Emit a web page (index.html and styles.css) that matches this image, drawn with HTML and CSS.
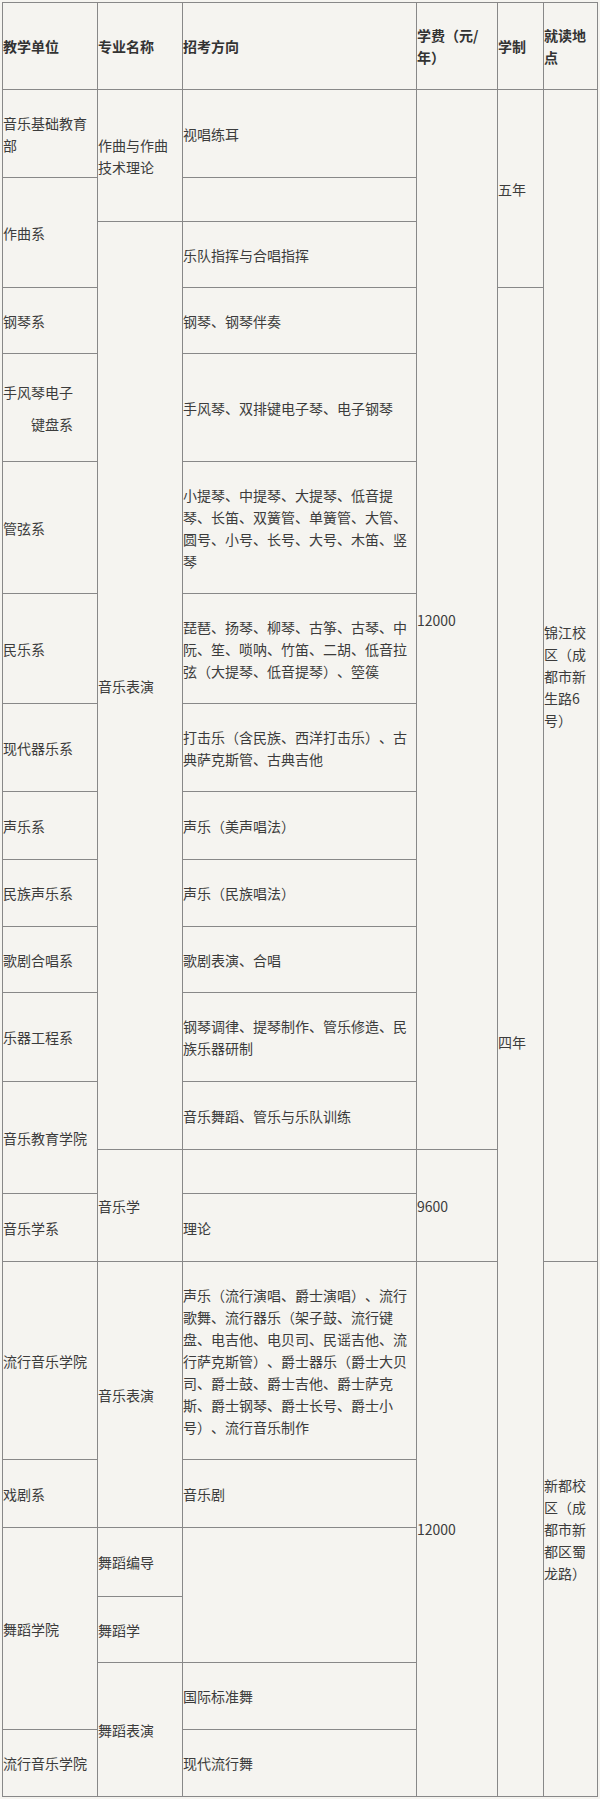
FILE: index.html
```html
<!DOCTYPE html>
<html lang="zh-CN">
<head>
<meta charset="utf-8">
<title>招生专业一览</title>
<link rel="stylesheet" href="styles.css">
</head>
<body>
<table class="grid">
  <colgroup>
    <col class="c-unit">
    <col class="c-major">
    <col class="c-dir">
    <col class="c-fee">
    <col class="c-len">
    <col class="c-loc">
  </colgroup>
  <thead>
    <tr class="h87">
      <th>教学单位</th>
      <th>专业名称</th>
      <th>招考方向</th>
      <th>学费（元/年）</th>
      <th>学制</th>
      <th>就读地点</th>
    </tr>
  </thead>
  <tbody>
    <tr class="h88">
      <td>音乐基础教育部</td>
      <td rowspan="2">作曲与作曲技术理论</td>
      <td>视唱练耳</td>
      <td rowspan="13">12000</td>
      <td rowspan="3">五年</td>
      <td rowspan="15">锦江校区（成都市新生路6号）</td>
    </tr>
    <tr class="h44">
      <td rowspan="2">作曲系</td>
      <td></td>
    </tr>
    <tr class="h66">
      <td rowspan="11">音乐表演</td>
      <td>乐队指挥与合唱指挥</td>
    </tr>
    <tr class="h66">
      <td>钢琴系</td>
      <td>钢琴、钢琴伴奏</td>
      <td rowspan="18">四年</td>
    </tr>
    <tr class="h108">
      <td><span class="line">手风琴电子</span><span class="line indent">键盘系</span></td>
      <td>手风琴、双排键电子琴、电子钢琴</td>
    </tr>
    <tr class="h132">
      <td>管弦系</td>
      <td>小提琴、中提琴、大提琴、低音提琴、长笛、双簧管、单簧管、大管、圆号、小号、长号、大号、木笛、竖琴</td>
    </tr>
    <tr class="h110">
      <td>民乐系</td>
      <td>琵琶、扬琴、柳琴、古筝、古琴、中阮、笙、唢呐、竹笛、二胡、低音拉弦（大提琴、低音提琴）、箜篌</td>
    </tr>
    <tr class="h88">
      <td>现代器乐系</td>
      <td>打击乐（含民族、西洋打击乐）、古典萨克斯管、古典吉他</td>
    </tr>
    <tr class="h68">
      <td>声乐系</td>
      <td>声乐（美声唱法）</td>
    </tr>
    <tr class="h67">
      <td>民族声乐系</td>
      <td>声乐（民族唱法）</td>
    </tr>
    <tr class="h66">
      <td>歌剧合唱系</td>
      <td>歌剧表演、合唱</td>
    </tr>
    <tr class="h89">
      <td>乐器工程系</td>
      <td>钢琴调律、提琴制作、管乐修造、民族乐器研制</td>
    </tr>
    <tr class="h68">
      <td rowspan="2">音乐教育学院</td>
      <td>音乐舞蹈、管乐与乐队训练</td>
    </tr>
    <tr class="h44">
      <td rowspan="2">音乐学</td>
      <td></td>
      <td rowspan="2">9600</td>
    </tr>
    <tr class="h68">
      <td>音乐学系</td>
      <td>理论</td>
    </tr>
    <tr class="h198">
      <td>流行音乐学院</td>
      <td rowspan="2">音乐表演</td>
      <td>声乐（流行演唱、爵士演唱）、流行歌舞、流行器乐（架子鼓、流行键盘、电吉他、电贝司、民谣吉他、流行萨克斯管）、爵士器乐（爵士大贝司、爵士鼓、爵士吉他、爵士萨克斯、爵士钢琴、爵士长号、爵士小号）、流行音乐制作</td>
      <td rowspan="6">12000</td>
      <td rowspan="6">新都校区（成都市新都区蜀龙路）</td>
    </tr>
    <tr class="h68">
      <td>戏剧系</td>
      <td>音乐剧</td>
    </tr>
    <tr class="h69">
      <td rowspan="3">舞蹈学院</td>
      <td>舞蹈编导</td>
      <td rowspan="2"></td>
    </tr>
    <tr class="h66">
      <td>舞蹈学</td>
    </tr>
    <tr class="h67">
      <td rowspan="2">舞蹈表演</td>
      <td>国际标准舞</td>
    </tr>
    <tr class="h67">
      <td>流行音乐学院</td>
      <td>现代流行舞</td>
    </tr>
  </tbody>
</table>
</body>
</html>
```

FILE: styles.css
```css
html, body {
  margin: 0;
  padding: 0;
  background: #f5f4f0;
}

body {
  padding: 2px 0 0 2px;
  font-family: "Noto Sans CJK SC", "Microsoft YaHei", sans-serif;
  font-size: 14px;
  line-height: 22px;
  color: #3c3c3c;
  text-spacing-trim: space-all;
  font-feature-settings: "halt" 0, "palt" 0, "chws" 0;
}

.grid {
  border-collapse: collapse;
  table-layout: fixed;
  width: 595px;
}

.c-unit { width: 95px; }
.c-major { width: 85px; }
.c-dir { width: 234px; }
.c-fee { width: 81px; }
.c-len { width: 46px; }
.c-loc { width: 54px; }

.grid th,
.grid td {
  border: 1px solid #888;
  padding: 0 2px 0 0;
  text-align: left;
  vertical-align: middle;
  word-break: normal;
}

.grid th {
  font-weight: 700;
  color: #333;
}

.line {
  display: block;
}

.indent {
  padding-left: 28px;
  margin-top: 10px;
}

.h44 { height: 44px; }
.h66 { height: 66px; }
.h67 { height: 67px; }
.h68 { height: 68px; }
.h69 { height: 69px; }
.h87 { height: 87px; }
.h88 { height: 88px; }
.h89 { height: 89px; }
.h108 { height: 108px; }
.h110 { height: 110px; }
.h132 { height: 132px; }
.h198 { height: 198px; }
```
